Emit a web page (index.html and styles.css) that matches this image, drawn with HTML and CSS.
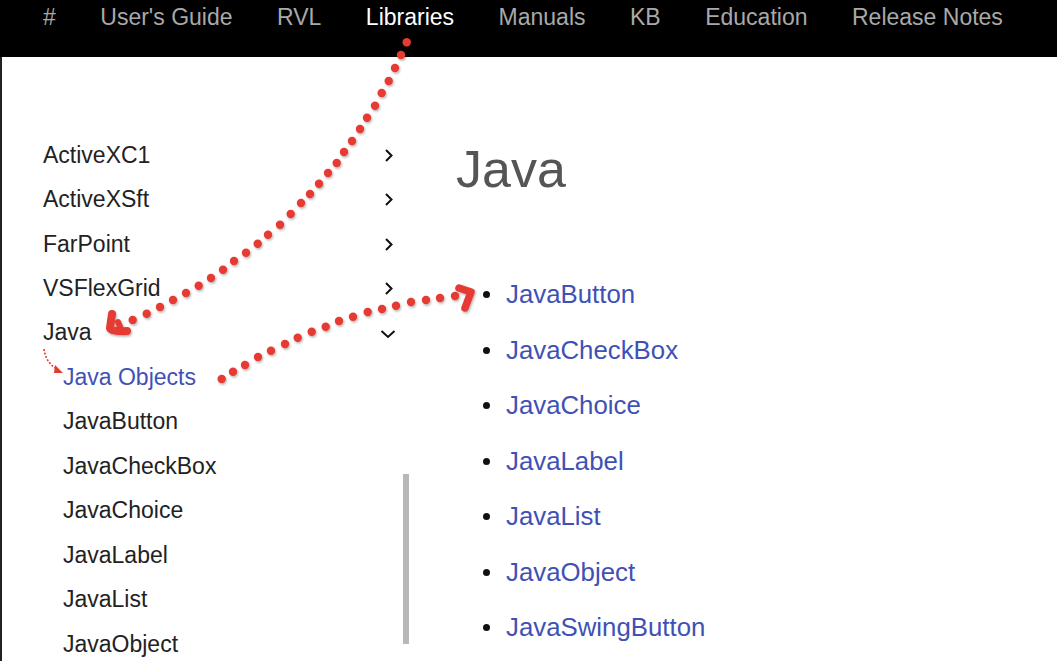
FILE: index.html
```html
<!DOCTYPE html>
<html>
<head>
<meta charset="utf-8">
<link rel="stylesheet" href="styles.css">
</head>
<body>
<nav class="topnav">
  <a class="nav-item">#</a>
  <a class="nav-item">User's Guide</a>
  <a class="nav-item">RVL</a>
  <a class="nav-item active">Libraries</a>
  <a class="nav-item">Manuals</a>
  <a class="nav-item">KB</a>
  <a class="nav-item">Education</a>
  <a class="nav-item">Release Notes</a>
</nav>
<div class="page">
  <aside class="sidebar">
    <div class="row"><span>ActiveXC1</span><svg class="chev" viewBox="0 0 10 13"><path d="M2 1 L7.5 6.5 L2 12"/></svg></div>
    <div class="row"><span>ActiveXSft</span><svg class="chev" viewBox="0 0 10 13"><path d="M2 1 L7.5 6.5 L2 12"/></svg></div>
    <div class="row"><span>FarPoint</span><svg class="chev" viewBox="0 0 10 13"><path d="M2 1 L7.5 6.5 L2 12"/></svg></div>
    <div class="row"><span>VSFlexGrid</span><svg class="chev" viewBox="0 0 10 13"><path d="M2 1 L7.5 6.5 L2 12"/></svg></div>
    <div class="row"><span>Java</span><svg class="chev down" viewBox="0 0 16 10"><path d="M1.5 2 L8 8 L14.5 2"/></svg></div>
    <div class="row sub current">Java Objects</div>
    <div class="row sub">JavaButton</div>
    <div class="row sub">JavaCheckBox</div>
    <div class="row sub">JavaChoice</div>
    <div class="row sub">JavaLabel</div>
    <div class="row sub">JavaList</div>
    <div class="row sub">JavaObject</div>
    <div class="thumb"></div>
  </aside>
  <main class="main">
    <h1 class="title">Java</h1>
    <ul class="links">
      <li><a>JavaButton</a></li>
      <li><a>JavaCheckBox</a></li>
      <li><a>JavaChoice</a></li>
      <li><a>JavaLabel</a></li>
      <li><a>JavaList</a></li>
      <li><a>JavaObject</a></li>
      <li><a>JavaSwingButton</a></li>
    </ul>
  </main>
</div>
<svg class="annot" viewBox="0 0 1057 661" width="1057" height="661">
  <defs>
    <filter id="sh" x="-20%" y="-20%" width="140%" height="140%">
      <feDropShadow dx="1" dy="1.5" stdDeviation="0.8" flood-color="#000" flood-opacity="0.3"/>
    </filter>
  </defs>
  <g fill="#e53a32" filter="url(#sh)">
    <circle cx="406.7" cy="42.3" r="4.2"/><circle cx="401" cy="55" r="4.2"/><circle cx="395" cy="68" r="4.2"/><circle cx="388.7" cy="81" r="4.2"/><circle cx="381.7" cy="93" r="4.2"/><circle cx="375" cy="105.7" r="4.2"/><circle cx="367" cy="117.7" r="4.2"/><circle cx="360" cy="129" r="4.2"/><circle cx="352" cy="141" r="4.2"/><circle cx="344" cy="152" r="4.2"/><circle cx="336.7" cy="163" r="4.2"/><circle cx="328" cy="173" r="4.2"/><circle cx="319" cy="183.7" r="4.2"/><circle cx="310" cy="194" r="4.2"/><circle cx="301" cy="203" r="4.2"/><circle cx="290.7" cy="214" r="4.2"/><circle cx="280" cy="224.7" r="4.2"/><circle cx="268" cy="234.7" r="4.2"/><circle cx="257.7" cy="243.7" r="4.2"/><circle cx="246" cy="252.7" r="4.2"/><circle cx="234" cy="261" r="4.2"/><circle cx="223" cy="269.7" r="4.2"/><circle cx="211" cy="278" r="4.2"/><circle cx="198.7" cy="285.7" r="4.2"/><circle cx="186" cy="293" r="4.2"/><circle cx="173" cy="300" r="4.2"/><circle cx="160" cy="307" r="4.2"/><circle cx="146.7" cy="313.7" r="4.2"/><circle cx="132.7" cy="320" r="4.2"/>
    <circle cx="221.7" cy="379" r="4.2"/><circle cx="233" cy="371.7" r="4.2"/><circle cx="245" cy="365" r="4.2"/><circle cx="258" cy="357" r="4.2"/><circle cx="271" cy="350.7" r="4.2"/><circle cx="285" cy="344" r="4.2"/><circle cx="297.7" cy="337.7" r="4.2"/><circle cx="311.7" cy="331.7" r="4.2"/><circle cx="325.7" cy="326.7" r="4.2"/><circle cx="339" cy="321" r="4.2"/><circle cx="353" cy="316.7" r="4.2"/><circle cx="367.7" cy="312" r="4.2"/><circle cx="382" cy="309" r="4.2"/><circle cx="396" cy="305.7" r="4.2"/><circle cx="411" cy="302" r="4.2"/><circle cx="426" cy="300" r="4.2"/><circle cx="440" cy="298" r="4.2"/><circle cx="455" cy="296" r="4.2"/>
  </g>
  <g fill="none" stroke="#e53a32" stroke-linecap="round" stroke-linejoin="round" filter="url(#sh)">
    <path d="M112 314 L110 328 Q111 332 127 331" stroke-width="8"/>
    <path d="M118 322 L121 329" stroke-width="6"/>
    <path d="M459 288 L471 292 L465 308" stroke-width="7.5"/>
  </g>
  <path d="M44 349 Q46 363 57 369" fill="none" stroke="#e53a32" stroke-width="1.6" stroke-dasharray="2 1.6"/>
  <path d="M55 365 L63 373 L54 373 Z" fill="#e53a32"/>
</svg>
</body>
</html>
```
FILE: styles.css
```css
html, body {
  margin: 0;
  padding: 0;
  background: #fff;
}
body {
  font-family: "Liberation Sans", Arial, sans-serif;
  width: 1057px;
  height: 661px;
  overflow: hidden;
  position: relative;
}
.topnav {
  height: 57px;
  background: #000;
  display: flex;
  align-items: flex-start;
  padding-left: 43px;
  gap: 44.5px;
  box-sizing: border-box;
}
.nav-item {
  color: #a9a9a9;
  font-size: 23px;
  line-height: 34px;
  white-space: nowrap;
}
.nav-item.active {
  color: #fff;
}
.page {
  display: flex;
  border-left: 2px solid #222;
  height: 604px;
  box-sizing: border-box;
}
.sidebar {
  width: 410px;
  flex: none;
  padding: 76px 0 0 41px;
  box-sizing: border-box;
  position: relative;
}
.row {
  display: flex;
  justify-content: space-between;
  align-items: center;
  width: 351px;
  height: 44.45px;
  font-size: 23px;
  color: #222;
  white-space: nowrap;
}
.row.sub {
  padding-left: 20px;
  box-sizing: border-box;
}
.row.current {
  color: #3f51b5;
}
.chev {
  width: 10px;
  height: 13px;
  fill: none;
  stroke: #111;
  stroke-width: 2;
}
.chev.down {
  width: 16px;
  height: 10px;
  margin-right: -2px;
  margin-top: 2px;
}
.thumb {
  position: absolute;
  left: 401px;
  top: 417px;
  width: 6px;
  height: 170px;
  background: #b8b8b8;
}
.main {
  flex: 1;
  padding-left: 44px;
}
.title {
  margin: 82px 0 0 0;
  font-weight: normal;
  font-size: 52px;
  line-height: 60px;
  color: #555;
}
.links {
  list-style: none;
  margin: 68px 0 0 0;
  padding: 0 0 0 27px;
}
.links li {
  display: flex;
  align-items: center;
  height: 55.5px;
  font-size: 25.8px;
}
.links li::before {
  content: "";
  width: 7px;
  height: 7px;
  border-radius: 50%;
  background: #111;
  margin-right: 16px;
  flex: none;
}
.links a {
  color: #3f51b5;
  white-space: nowrap;
}
.annot {
  position: absolute;
  left: 0;
  top: 0;
  pointer-events: none;
}
```
